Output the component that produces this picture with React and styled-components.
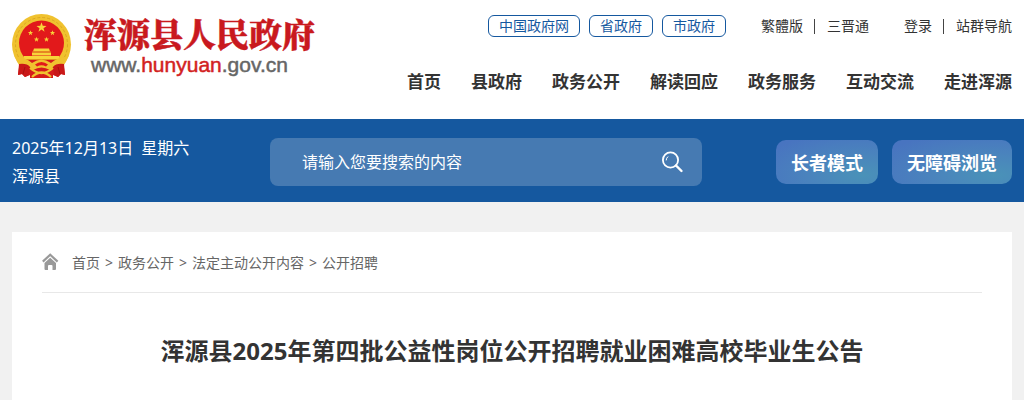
import React from 'react';
import styled, { createGlobalStyle } from 'styled-components';

const GlobalStyle = createGlobalStyle`
  * {
    box-sizing: border-box;
  }

  body {
    margin: 0;
    background: #f1f1f1;
    color: #333;
    font-family: "Noto Sans", "Noto Sans CJK SC", sans-serif;
    font-size: 14px;
  }

  a {
    color: inherit;
    text-decoration: none;
  }
`;

const Header = styled.header`
  display: flex;
  justify-content: space-between;
  padding: 14px 12px 25px;
  background: #fff;
`;

const Logo = styled.a`
  display: flex;
  gap: 12px;
`;

const Emblem = styled.svg`
  width: 60px;
  height: 65px;
`;

const LogoText = styled.div`
  display: flex;
  flex-direction: column;
`;

const SiteName = styled.span`
  color: #c9191e;
  font-family: "Noto Serif CJK SC", "Noto Sans CJK SC", serif;
  font-size: 33px;
  font-weight: 900;
  line-height: 38px;
  white-space: nowrap;
  -webkit-text-stroke: 0.5px currentColor;
`;

const SiteUrl = styled.span`
  padding-left: 7px;
  color: #666;
  font-family: "Liberation Sans", sans-serif;
  font-size: 21px;
  line-height: 26px;
  -webkit-text-stroke: 0.5px currentColor;

  em {
    color: #d3221f;
    font-style: normal;
  }
`;

const HeaderRight = styled.div`
  display: flex;
  flex-direction: column;
  align-items: flex-end;
  gap: 33px;
  white-space: nowrap;
`;

const TopLinks = styled.div`
  display: flex;
  align-items: center;
  gap: 35px;
  margin-top: 1px;
`;

const Tags = styled.div`
  display: flex;
  gap: 9px;
`;

const Tag = styled.a`
  padding: 0 10px;
  border: 1px solid #15589f;
  border-radius: 6px;
  line-height: 20px;

  && {
    color: #15589f;
  }
`;

const LinkPair = styled.div`
  display: flex;
  align-items: center;
  gap: 11px;
  line-height: 20px;
`;

const Divider = styled.span`
  width: 1px;
  height: 15px;
  margin-right: 1px;
  background: #444;
`;

const Nav = styled.nav`
  display: flex;
  gap: 30px;
  font-size: 17px;
  font-weight: 700;
  line-height: 24px;
`;

const Banner = styled.section`
  display: flex;
  align-items: center;
  padding: 15px 12px 12px;
  background: #15589f;
  color: #fff;
`;

const Today = styled.div`
  flex: 0 0 258px;
  font-size: 16px;
  line-height: 28px;

  p {
    display: flex;
    gap: 8px;
    margin: 0;
  }
`;

const SearchForm = styled.form`
  display: flex;
  flex: 0 1 432px;
  align-items: center;
  height: 48px;
  padding: 0 16px 0 32px;
  border-radius: 8px;
  background: #467ab2;
`;

const SearchInput = styled.input`
  flex: 1;
  min-width: 0;
  height: 48px;
  padding: 0;
  border: 0;
  outline: 0;
  background: none;
  color: #fff;
  font-family: inherit;
  font-size: 16px;

  &::placeholder {
    color: #fff;
    opacity: 1;
  }
`;

const SearchButton = styled.button`
  display: flex;
  padding: 2px;
  border: 0;
  background: none;
  color: #fff;
  cursor: pointer;
`;

const Modes = styled.div`
  display: flex;
  gap: 14px;
  margin-left: auto;
`;

const ModeButton = styled.button`
  height: 44px;
  padding: 0 15px;
  border: 0;
  border-radius: 10px;
  background: radial-gradient(ellipse at 85% 80%, #4a92b8 0%, #4a83bd 45%, #4874c0 90%);
  color: #fff;
  font-family: inherit;
  font-size: 18px;
  font-weight: 700;
  white-space: nowrap;
  cursor: pointer;
`;

const Article = styled.main`
  margin: 30px 12px 0;
  padding: 0 30px 31px;
  background: #fff;
`;

const Breadcrumb = styled.nav`
  display: flex;
  align-items: center;
  gap: 5px;
  height: 61px;
  border-bottom: 1px solid #e8e8e8;
  color: #666;

  svg {
    margin-right: 8px;
  }
`;

const Title = styled.h1`
  margin: 40px 0 0;
  font-size: 24px;
  font-weight: 700;
  line-height: 36px;
  text-align: center;
`;

const navItems = ['首页', '县政府', '政务公开', '解读回应', '政务服务', '互动交流', '走进浑源'];
const crumbs = ['首页', '政务公开', '法定主动公开内容', '公开招聘'];
const star = '0,-5 1.2,-1.6 4.8,-1.5 1.9,0.6 2.9,4 0,2 -2.9,4 -1.9,0.6 -4.8,-1.5 -1.2,-1.6';

function NationalEmblem() {
  return (
    <Emblem viewBox="0 0 60 65" aria-hidden="true">
      <ellipse cx="29.5" cy="30.5" rx="29.5" ry="30.5" fill="#f0c22f" />
      <ellipse cx="29.5" cy="30.5" rx="26" ry="27" fill="none" stroke="#dca722" strokeWidth="1" strokeDasharray="3 2" />
      <circle cx="29.5" cy="29" r="22.5" fill="#e2191b" />
      <g fill="#f8d43a">
        <polygon points={star} transform="translate(29.5 13.5) scale(1.05)" />
        <polygon points={star} transform="translate(18.5 19) scale(.55)" />
        <polygon points={star} transform="translate(40.5 19) scale(.55)" />
        <polygon points={star} transform="translate(24.5 25.5) scale(.55)" />
        <polygon points={star} transform="translate(34.5 25.5) scale(.55)" />
        <path d="M22 34.5h15l1 3H21zM20 38.5h19v3H20zM12 42h35v3.5H12z" />
      </g>
      <path d="M20 38h19M13 45.5h33" stroke="#e0941d" strokeWidth="1" />
      <path d="M8 46 L6 61 L10 60 L13 63 L18 61 V64 H41 V61 L46 63 L49 60 L53 61 L51 46Z" fill="#d51c1b" />
      <path d="M3 43 Q14 43 20 49 Q29.5 42 39 49 Q45 43 56 43 L52 51 Q43 50 38 56 Q29.5 51 21 56 Q16 50 7 51Z" fill="#f0c22f" />
      <path d="M7 50 Q15 49 18 53 L17 61 L13 63 L10 60 L6 61Z M52 50 Q44 49 41 53 L42 61 L46 63 L49 60 L53 61Z" fill="#c91818" />
      <path d="M23 50.5 Q29.5 45.5 36 50.5 L34 52.5 Q29.5 50 25 52.5Z" fill="#e2191b" />
      <path d="M18 54 Q29.5 64 41 54 M20 63 Q29.5 54 39 63" fill="none" stroke="#f0c22f" strokeWidth="2.2" />
      <path d="M13 53 L11 60 M46 53 L48 60" stroke="#a9110f" strokeWidth="1" />
    </Emblem>
  );
}

function App() {
  return (
    <>
      <GlobalStyle />
      <Header>
        <Logo href="#">
          <NationalEmblem />
          <LogoText>
            <SiteName>浑源县人民政府</SiteName>
            <SiteUrl>www.<em>hunyuan</em>.gov.cn</SiteUrl>
          </LogoText>
        </Logo>
        <HeaderRight>
          <TopLinks>
            <Tags>
              <Tag href="#">中国政府网</Tag>
              <Tag href="#">省政府</Tag>
              <Tag href="#">市政府</Tag>
            </Tags>
            <LinkPair>
              <a href="#">繁體版</a>
              <Divider />
              <a href="#">三晋通</a>
            </LinkPair>
            <LinkPair>
              <a href="#">登录</a>
              <Divider />
              <a href="#">站群导航</a>
            </LinkPair>
          </TopLinks>
          <Nav>
            {navItems.map((item) => <a href="#" key={item}>{item}</a>)}
          </Nav>
        </HeaderRight>
      </Header>

      <Banner>
        <Today>
          <p>
            <span>2025年12月13日</span>
            <span>星期六</span>
          </p>
          <p>浑源县</p>
        </Today>
        <SearchForm>
          <SearchInput type="text" aria-label="搜索" placeholder="请输入您要搜索的内容" />
          <SearchButton type="button" aria-label="搜索">
            <svg width="24" height="24" viewBox="0 0 24 24" fill="none" stroke="currentColor" strokeLinecap="round">
              <circle cx="10.5" cy="10" r="7.6" strokeWidth="1.8" />
              <path d="M16 15.5 L21.5 21" strokeWidth="2.4" />
              <path d="M6.2 10 A4.2 4.2 0 0 1 7.8 6.8" strokeWidth="1" />
            </svg>
          </SearchButton>
        </SearchForm>
        <Modes>
          <ModeButton type="button">长者模式</ModeButton>
          <ModeButton type="button">无障碍浏览</ModeButton>
        </Modes>
      </Banner>

      <Article>
        <Breadcrumb>
          <svg width="17" height="18" viewBox="0 0 17 18" aria-hidden="true">
            <path d="M0.8 8.6 L8.2 1.8 L15.6 8.6" fill="none" stroke="#999" strokeWidth="2.2" />
            <path d="M2.5 10 L8.2 4.8 L14 10 V16 Q14 17 13 17 H10.5 V13 Q10.5 12 9.5 12 H7 Q6 12 6 13 V17 H3.5 Q2.5 17 2.5 16Z" fill="#999" />
          </svg>
          {crumbs.map((crumb, i) => (
            <React.Fragment key={crumb}>
              {i > 0 && <span>&gt;</span>}
              <a href="#">{crumb}</a>
            </React.Fragment>
          ))}
        </Breadcrumb>
        <Title>浑源县2025年第四批公益性岗位公开招聘就业困难高校毕业生公告</Title>
      </Article>
    </>
  );
}

export default App;
